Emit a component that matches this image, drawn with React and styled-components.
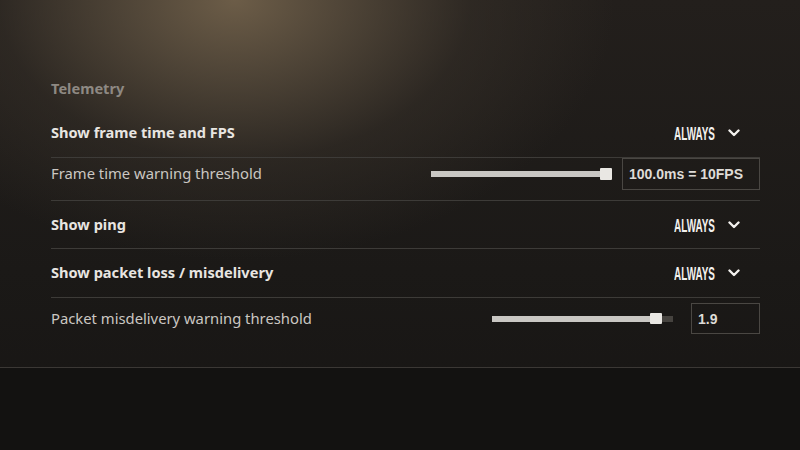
import React from "react";
import styled, { createGlobalStyle } from "styled-components";

const GlobalStyle = createGlobalStyle`
  html, body { margin: 0; padding: 0; }
  body { background: #141211; }
  #root { width: 800px; height: 450px; }
`;

const Page = styled.div`
  width: 800px;
  height: 450px;
  display: flex;
  flex-direction: column;
  overflow: hidden;
  background:
    radial-gradient(ellipse 380px 260px at 235px 0px, rgba(112, 96, 74, 0.95) 0%, rgba(90, 78, 62, 0.78) 30%, rgba(58, 51, 43, 0.48) 62%, rgba(30, 27, 24, 0) 100%),
    linear-gradient(180deg, #231f1c 0%, #1b1917 60%, #171514 100%);
  font-family: "Noto Sans", "Open Sans", sans-serif;
`;

const Main = styled.main`
  height: 367px;
  box-sizing: border-box;
  padding: 78px 40px 0 51px;
  display: flex;
  flex-direction: column;
`;

const Footer = styled.footer`
  flex: 1;
  border-top: 1px solid #3b3835;
  background: #131211;
`;

const Heading = styled.h2`
  margin: 0 0 11px;
  font-size: 14.6px;
  line-height: 20px;
  font-weight: 700;
  color: #8e8983;
`;

const List = styled.div`
  display: flex;
  flex-direction: column;
  width: 709px;
`;

const Row = styled.div`
  display: flex;
  align-items: center;
  justify-content: space-between;
  box-sizing: border-box;
  height: ${(p) => p.$h}px;
  padding: ${(p) => p.$pad || "0"};
  border-bottom: ${(p) => (p.$divider ? "1px solid #3d3b38" : "none")};
`;

const Label = styled.span`
  margin-top: -2px;
  font-size: ${(p) => (p.$bold ? 14.6 : 14.8)}px;
  line-height: 20px;
  font-weight: ${(p) => (p.$bold ? 700 : 400)};
  color: ${(p) => (p.$bold ? "#e8e5e1" : "#cbc7c2")};
  white-space: nowrap;
`;

const Dropdown = styled.div`
  display: flex;
  align-items: center;
  gap: 12px;
  padding-right: 20px;
  color: #f3f1ee;
`;

const CondensedBox = styled.span`
  display: inline-block;
  width: 42px;
  height: 20px;
  white-space: nowrap;
`;

const Condensed = styled.span`
  display: inline-block;
  font-family: "Liberation Sans", Arial, sans-serif;
  font-weight: 700;
  font-size: 18px;
  line-height: 20px;
  transform: scaleX(0.55);
  transform-origin: left center;
`;

const Controls = styled.div`
  display: flex;
  align-items: center;
  gap: ${(p) => p.$gap}px;
`;

const Slider = styled.div`
  width: 181px;
  height: 12px;
  display: flex;
  align-items: center;
`;

const Fill = styled.div`
  height: 6px;
  background: #c9c7c3;
`;

const Thumb = styled.div`
  width: 12px;
  height: ${(p) => p.$h}px;
  background: #e9e7e3;
  border-radius: 1px;
  flex: none;
`;

const Rest = styled.div`
  flex: 1;
  height: 6px;
  background: #46433f;
`;

const ValueBox = styled.div`
  box-sizing: border-box;
  width: ${(p) => p.$w}px;
  height: ${(p) => p.$h}px;
  border: 1px solid #4a4743;
  display: flex;
  align-items: center;
  padding-left: 6px;
  font-family: "Liberation Sans", Arial, sans-serif;
  font-weight: 700;
  font-size: 14px;
  color: #dedbd7;
  white-space: nowrap;
`;

const Chevron = () => (
  <svg width="12" height="8" viewBox="0 0 12 8">
    <polyline
      points="1.5,1.5 6,6 10.5,1.5"
      fill="none"
      stroke="#f3f1ee"
      strokeWidth="2.4"
      strokeLinecap="round"
      strokeLinejoin="round"
    />
  </svg>
);

const Select = ({ value }) => (
  <Dropdown>
    <CondensedBox>
      <Condensed>{value}</Condensed>
    </CondensedBox>
    <Chevron />
  </Dropdown>
);

const Range = ({ pct, thumbH }) => (
  <Slider>
    <Fill style={{ width: `${(pct * 169).toFixed(0)}px` }} />
    <Thumb $h={thumbH} />
    <Rest />
  </Slider>
);

export default function App() {
  return (
    <>
      <GlobalStyle />
      <Page>
        <Main>
          <Heading>Telemetry</Heading>
          <List>
            <Row $h={49} $divider>
              <Label $bold>Show frame time and FPS</Label>
              <Select value="ALWAYS" />
            </Row>
            <Row $h={43} $divider $pad="0 0 10px">
              <Label>Frame time warning threshold</Label>
              <Controls $gap={10}>
                <Range pct={1} thumbH={12} />
                <ValueBox $w={138} $h={32}>100.0ms = 10FPS</ValueBox>
              </Controls>
            </Row>
            <Row $h={48} $divider>
              <Label $bold>Show ping</Label>
              <Select value="ALWAYS" />
            </Row>
            <Row $h={49} $divider>
              <Label $bold>Show packet loss / misdelivery</Label>
              <Select value="ALWAYS" />
            </Row>
            <Row $h={43} $pad="5px 0 7px">
              <Label>Packet misdelivery warning threshold</Label>
              <Controls $gap={18}>
                <Range pct={158 / 169} thumbH={11} />
                <ValueBox $w={69} $h={31}>1.9</ValueBox>
              </Controls>
            </Row>
          </List>
        </Main>
        <Footer />
      </Page>
    </>
  );
}
